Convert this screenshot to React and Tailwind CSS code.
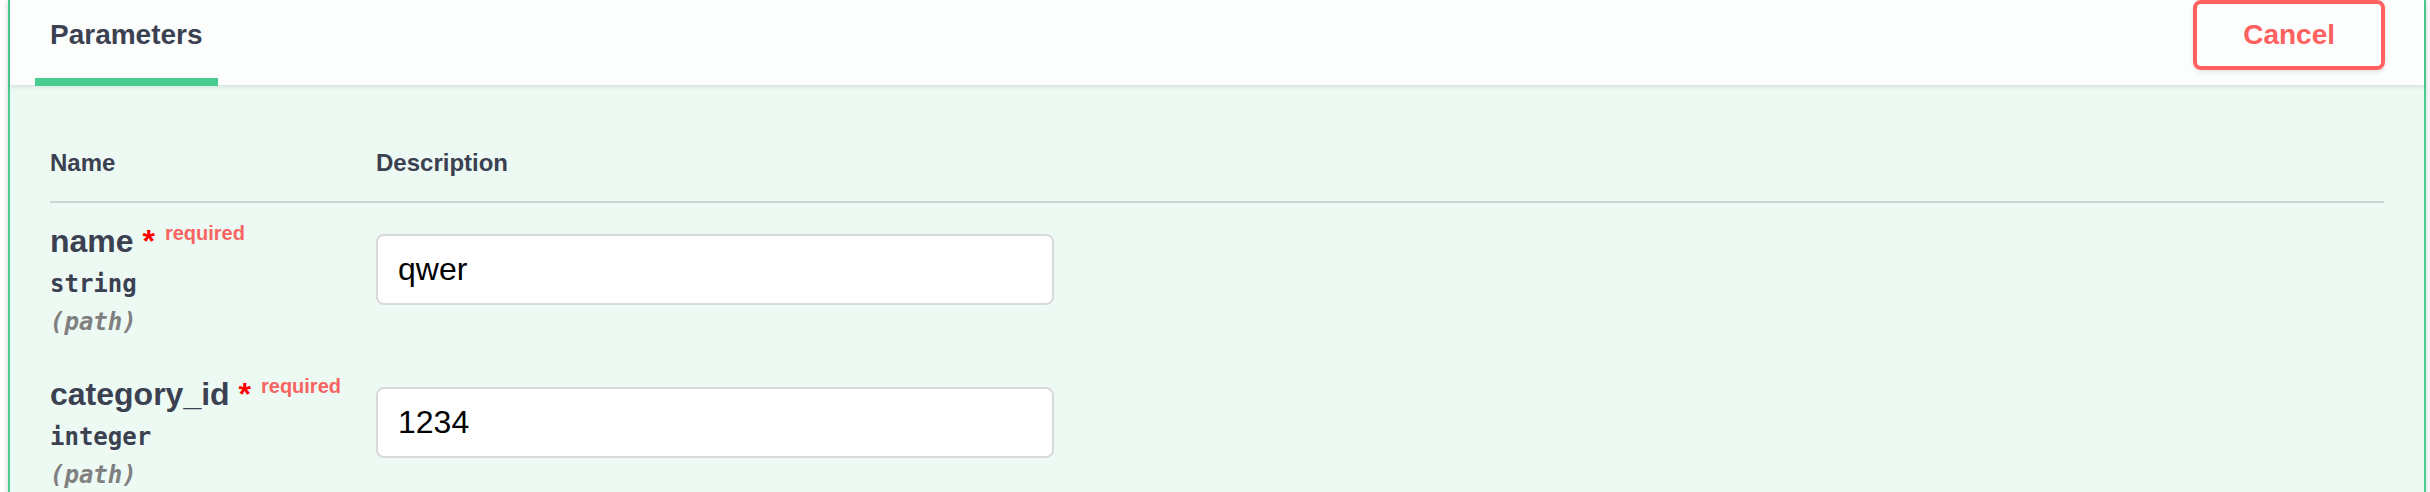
import { useState } from "react";

const params = [
  { name: "name", type: "string", value: "qwer" },
  { name: "category_id", type: "integer", value: "1234" },
];

export default function App() {
  const [values, setValues] = useState(params.map((p) => p.value));

  return (
    <div className="h-[492px] overflow-hidden bg-white font-['Liberation_Sans',Arial,sans-serif] text-[#3b4151]">
      <div className="ml-[8px] mr-[4px] border-x-2 border-[#49cc90] bg-[#edfaf4] shadow-[0_0_6px_rgba(0,0,0,0.19)]">
        {/* section header */}
        <div className="relative flex h-[85px] items-center justify-between bg-[#fbfefd] pb-[15px] pl-[40px] pr-[39px] shadow-[0_2px_4px_rgba(0,0,0,0.1)]">
          <h4 className="text-[28px] font-bold">
            <span className="relative inline-block">
              Parameters
              <span className="absolute bottom-[-30px] left-[-10%] h-[8px] w-[120%] bg-[#49cc90]"></span>
            </span>
          </h4>
          <button className="rounded-[8px] border-4 border-[#ff6060] px-[46px] py-[10px] text-[28px] font-bold text-[#ff6060] shadow-[0_2px_4px_rgba(0,0,0,0.1)]">
            Cancel
          </button>
        </div>

        {/* table */}
        <div className="px-[40px] pt-[40px]">
          <div className="grid grid-cols-[326px_1fr] border-b-2 border-[#c9d5d3] py-[24px] text-[24px] font-bold leading-[28px]">
            <div>Name</div>
            <div>Description</div>
          </div>

          {params.map((p, i) => (
            <div key={p.name} className="grid grid-cols-[326px_1fr] py-[20px]">
              <div>
                <div className="text-[32px] font-bold leading-[37px]">
                  {p.name}
                  <span className="text-[#ff0000]">&nbsp;*</span>
                  <span className="relative top-[-12px] px-[10px] text-[20px] leading-[20px] text-[#f86462]">required</span>
                </div>
                <div className="py-[10px] font-['DejaVu_Sans_Mono',monospace] text-[24px] font-bold leading-[28px]">
                  {p.type}
                </div>
                <div className="font-['DejaVu_Sans_Mono',monospace] text-[24px] font-bold italic leading-[28px] text-[#808080]">
                  (path)
                </div>
              </div>
              <div className="pt-[11px]">
                <input
                  type="text"
                  value={values[i]}
                  onChange={(e) => {
                    const next = [...values];
                    next[i] = e.target.value;
                    setValues(next);
                  }}
                  className="h-[71px] w-[678px] rounded-[8px] border-2 border-[#d9d9d9] bg-white px-[20px] font-['Liberation_Sans',Arial,sans-serif] text-[32px] text-black outline-none"
                />
              </div>
            </div>
          ))}
        </div>
      </div>
    </div>
  );
}
